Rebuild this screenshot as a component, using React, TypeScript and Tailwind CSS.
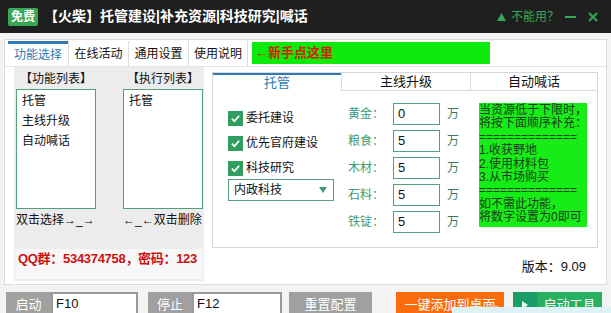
import React from "react"

const resources = [
  { name: "黄金", value: "0" },
  { name: "粮食", value: "5" },
  { name: "木材", value: "5" },
  { name: "石料", value: "5" },
  { name: "铁锭", value: "5" },
]

const noteLines = [
  "当资源低于下限时，",
  "将按下面顺序补充：",
  "==============",
  "1.收获野地",
  "2.使用材料包",
  "3.从市场购买",
  "==============",
  "如不需此功能，",
  "将数字设置为0即可",
]

function Check() {
  return (
    <span className="w-[15px] h-[15px] bg-[#2f9e5e] flex items-center justify-center shrink-0">
      <svg width="11" height="11" viewBox="0 0 12 12">
        <path d="M2 6.2 L4.8 9 L10 3" fill="none" stroke="white" strokeWidth="2" />
      </svg>
    </span>
  )
}

export default function App() {
  return (
    <div className="w-[611px] h-[313px] overflow-hidden relative bg-[#f3f3f3] text-[12px] text-[#111] font-['Liberation_Sans','Noto_Sans_CJK_SC',sans-serif]">
      {/* Title bar */}
      <div className="h-[33px] bg-[#1f1f1f] flex items-center pl-[8px] pr-[13px]">
        <span className="bg-[#3aa757] text-white text-[12px] leading-[18px] px-[3px] rounded-[2px] font-bold">免费</span>
        <span className="ml-[6px] text-white text-[14px] font-bold">【火柴】托管建设|补充资源|科技研究|喊话</span>
        <div className="ml-auto flex items-center text-[#35a853] text-[12px]">
          <svg width="9" height="8" viewBox="0 0 9 8">
            <path d="M4.5 0 L9 8 L0 8 Z" fill="#35a853" />
          </svg>
          <span className="ml-[5px]">不能用？</span>
          <span className="ml-[6px] w-[11px] h-[2px] bg-[#35a853]" />
          <svg className="ml-[12px]" width="10" height="10" viewBox="0 0 10 10">
            <path d="M1 1 L9 9 M9 1 L1 9" stroke="#35a853" strokeWidth="2" />
          </svg>
        </div>
      </div>

      {/* Main tabbed window */}
      <div className="mx-[4px] mt-[6px] bg-white border border-[#dcdcdc] h-[246px]">
        <div className="flex items-start h-[27px] pl-[3px] pt-[1px] border-b border-[#e2e2e2]">
          <div className="w-[60px] h-[25px] border-t-[3px] border-[#2d7ab5] flex items-center justify-center text-[#2d7ab5]">功能选择</div>
          <div className="w-[60px] h-[25px] border-l border-[#dcdcdc] flex items-center justify-center">在线活动</div>
          <div className="w-[60px] h-[25px] border-l border-[#dcdcdc] flex items-center justify-center">通用设置</div>
          <div className="w-[60px] h-[25px] border-x border-[#dcdcdc] flex items-center justify-center">使用说明</div>
          <div className="ml-[4px] mt-[1px] w-[238px] h-[22px] bg-[#0bea0b] flex items-center pl-[3px] text-[#d42000] font-bold text-[13px]">
            ←新手点这里
          </div>
        </div>

        <div className="flex">
          {/* Left lists */}
          <div className="ml-[9px] w-[190px] h-[214px] bg-[#ececec] flex flex-col">
            <div className="flex pl-[2px] gap-[27px]">
              {[
                { title: "【功能列表】", items: ["托管", "主线升级", "自动喊话"], hint: "双击选择→_→" },
                { title: "【执行列表】", items: ["托管"], hint: "←_←双击删除" },
              ].map((col) => (
                <div key={col.title} className="w-[80px]">
                  <div className="mt-[4px] h-[16px] leading-[16px] text-center">{col.title}</div>
                  <div className="mt-[2px] h-[120px] bg-white border border-[#54a07c] pt-[1px] pl-[5px]">
                    {col.items.map((it) => (
                      <div key={it} className="leading-[20px] text-[12px]">{it}</div>
                    ))}
                  </div>
                  <div className="mt-[3px] h-[16px] leading-[16px] whitespace-nowrap">{col.hint}</div>
                </div>
              ))}
            </div>
            <div className="mt-[21px] ml-[1px] w-[188px] h-[30px] bg-[#f7f7f7] pl-[3px] text-[#cc1111] font-bold text-[13px] tracking-[-0.3px] leading-[20px] whitespace-nowrap">
              QQ群：534374758，密码：123
            </div>
          </div>

          {/* Right panel */}
          <div className="ml-[8px] flex flex-col">
            <div className="mt-[5px] w-[386px] h-[176px] border border-[#d8d8d8] bg-white">
              <div className="flex h-[18px]">
                <div className="w-[128px] border-t-2 border-[#2d7ab5] flex items-center justify-center text-[#2d7ab5] text-[13px]">托管</div>
                <div className="w-[129px] border-l border-b border-[#dcdcdc] flex items-center justify-center text-[13px]">主线升级</div>
                <div className="w-[127px] border-l border-b border-[#dcdcdc] flex items-center justify-center text-[13px]">自动喊话</div>
              </div>
              <div className="flex pl-[15px]">
                <div className="w-[106px] flex flex-col text-[12px]">
                  <div className="mt-[19px] h-[16px] flex items-center gap-[3px]"><Check /><span>委托建设</span></div>
                  <div className="mt-[9px] h-[16px] flex items-center gap-[3px]"><Check /><span>优先官府建设</span></div>
                  <div className="mt-[9px] h-[16px] flex items-center gap-[3px]"><Check /><span>科技研究</span></div>
                  <div className="mt-[3px] h-[22px] border border-[#54a07c] flex items-center pl-[5px] pr-[6px]">
                    <span>内政科技</span>
                    <svg className="ml-auto" width="8" height="6" viewBox="0 0 8 6">
                      <path d="M0 0 L8 0 L4 6 Z" fill="#3d9b6d" />
                    </svg>
                  </div>
                </div>
                <div className="ml-[14px] mt-[12px] flex flex-col gap-[5px]">
                  {resources.map((r) => (
                    <div key={r.name} className="flex items-center h-[22px]">
                      <span className="w-[45px] text-[#3d9b6d] text-[12px]">{r.name}：</span>
                      <div className="w-[47px] h-[22px] border border-[#54a07c] flex items-center pl-[4px] text-[13px]">{r.value}</div>
                      <span className="ml-[7px] text-[#3d7a5d] text-[12px]">万</span>
                    </div>
                  ))}
                </div>
                <div className="ml-[20px] mt-[12px] w-[108px] h-[124px] bg-[#16ec16] text-[#1b3a1b] text-[12px] leading-[13.4px] pt-[1px] whitespace-nowrap overflow-hidden">
                  {noteLines.map((l, i) => (
                    <div key={i}>{l}</div>
                  ))}
                </div>
              </div>
            </div>
            <div className="mt-[11px] pr-[12px] text-right text-[13px] leading-[16px]">版本：9.09</div>
          </div>
        </div>
      </div>

      {/* Bottom controls */}
      <div className="flex items-start mt-[7px] pl-[6px] text-[13px]">
        <div className="w-[45px] h-[26px] bg-[#a0a0a0] text-white flex items-center justify-center">启动</div>
        <div className="w-[87px] h-[26px] border-2 border-[#9a9a9a] bg-white pl-[3px] leading-[20px]">F10</div>
        <div className="ml-[10px] w-[44px] h-[26px] bg-[#a0a0a0] text-white flex items-center justify-center">停止</div>
        <div className="w-[90px] h-[26px] border-2 border-[#9a9a9a] bg-white pl-[3px] leading-[20px]">F12</div>
        <div className="ml-[7px] w-[83px] h-[26px] bg-[#a0a0a0] text-white flex items-center justify-center">重置配置</div>
        <div className="ml-[24px] w-[108px] h-[26px] bg-[#f96b0d] text-white flex items-center justify-center">一键添加到桌面</div>
        <div className="ml-[9px] w-[89px] h-[26px] bg-[#25b062] text-white flex">
          <div className="w-[24px] bg-[#1c9c66] flex items-center justify-center">
            <svg width="6" height="8" viewBox="0 0 6 8">
              <path d="M0 0 L6 4 L0 8 Z" fill="#e8fff0" />
            </svg>
          </div>
          <div className="flex-1 flex items-center justify-center">启动工具</div>
        </div>
      </div>

      {/* Overlay strip peeking in at bottom */}
      <div className="absolute left-[482px] top-[305px] w-[22px] h-[22px] rounded-full bg-[#f8b27c]" />
      <div className="absolute left-[452px] top-[307px] w-[159px] h-[8px] bg-[#dcf2f6]" />
    </div>
  )
}
